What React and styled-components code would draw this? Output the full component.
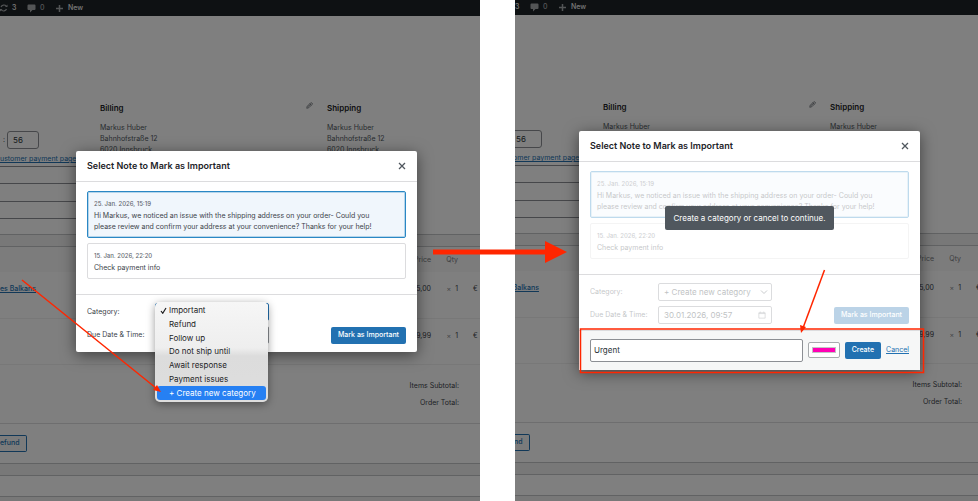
import styled, { createGlobalStyle, css } from 'styled-components';
import { useState } from 'react';

const categories = [
    'Important',
    'Refund',
    'Follow up',
    'Do not ship until',
    'Await response',
    'Payment issues',
    '+ Create new category',
];

const notes = [
    {
        id: 1,
        date: '25. Jan. 2026, 15:19',
        text: 'Hi Markus, we noticed an issue with the shipping address on your order- Could you please review and confirm your address at your convenience? Thanks for your help!',
    },
    { id: 2, date: '15. Jan. 2026, 22:20', text: 'Check payment info' },
];

const items = [
    { id: 1, name: 'es Balkans', price: '15,00' },
    { id: 2, name: '', price: '19,99' },
];

const Address = ({ title, editable }) => (
    <AddressColumn>
        <AddressTitle>
            {title}
            {editable && <PencilIcon />}
        </AddressTitle>
        <AddressText>
            Markus Huber<br />
            Bahnhofstraße 12<br />
            6020 Innsbruck
        </AddressText>
    </AddressColumn>
);

const PencilIcon = () => (
    <svg width="7" height="7" viewBox="0 0 14 14" fill="none" stroke="#646970" strokeWidth="1.6">
        <path d="M1.5 12.5l1-4 6.5-6.5q1.500-1 3 0t0 3L5.500 11.500z M7.500 3.500l3 3 M4 9.500l4-4" />
    </svg>
);

const OrderPage = () => (
    <>
        <AdminBar>
            <svg width="8" height="10" viewBox="0 0 16 20" fill="none" stroke="#a7aaad" strokeWidth="2.4">
                <path d="M2 8a6 6 0 0 1 10.500-1.500M13 12a6 6 0 0 1-10.500 1.500" />
                <path d="M10 8h5V3zM5 12H0v5z" fill="#a7aaad" stroke="none" />
            </svg>
            <Count>3</Count>
            <svg width="9" height="9" viewBox="0 0 18 18" fill="#a7aaad">
                <path d="M3 1h12q2 0 2 2v7q0 2-2 2h-4l-5 5v-5H3q-2 0-2-2V3q0-2 2-2z" />
            </svg>
            <Count $dim>0</Count>
            <svg width="9" height="9" viewBox="0 0 18 18" stroke="#a7aaad" strokeWidth="3">
                <path d="M9 2v14M2 9h14" />
            </svg>
            <span>New</span>
        </AdminBar>
        <OrderData>
            <OrderFields>
                <TimeRow>
                    :<MinuteInput aria-label="Minute" defaultValue="56" />
                </TimeRow>
                <PageLink href="#pay">ustomer payment page</PageLink>
                <FieldSelect aria-label="Status" />
                <FieldSelect aria-label="Customer" />
            </OrderFields>
            <Address title="Billing" editable />
            <Address title="Shipping" />
        </OrderData>
        <Postbox>
            <ItemsTable>
                <thead>
                    <tr>
                        <th></th>
                        <PriceHead>Price</PriceHead>
                        <QtyHead>Qty</QtyHead>
                        <TotalHead></TotalHead>
                    </tr>
                </thead>
                <tbody>
                    {items.map((item) => (
                        <tr key={item.id}>
                            <NameCell>{item.name && <a href="#item">{item.name}</a>}</NameCell>
                            <td>{item.price}</td>
                            <td><Times>×</Times> 1</td>
                            <TotalCell>€</TotalCell>
                        </tr>
                    ))}
                </tbody>
            </ItemsTable>
            <Totals>
                <div>Items Subtotal:</div>
                <div>Order Total:</div>
            </Totals>
            <RefundRow>
                <RefundButton>efund</RefundButton>
            </RefundRow>
        </Postbox>
        <Postbox>
            <PostboxHead />
        </Postbox>
    </>
);

const NoteModal = ({ creating }) => {
    const [selected, setSelected] = useState(1);
    const [name, setName] = useState('Urgent');
    const [color, setColor] = useState('#ff00b4');
    const id = creating ? 'create' : 'pick';

    return (
        <Modal role="dialog" aria-labelledby={`${id}-title`}>
            <ModalHeader>
                <ModalTitle id={`${id}-title`}>Select Note to Mark as Important</ModalTitle>
                <CloseButton aria-label="Close">
                    <svg width="8" height="8" viewBox="0 0 8 8" stroke="#50575e" strokeWidth="1.300">
                        <path d="M1 1l6 6M7 1l-6 6" />
                    </svg>
                </CloseButton>
            </ModalHeader>
            <ModalBody>
                <NoteList $dim={creating}>
                    {notes.map((note) => (
                        <Note
                            key={note.id}
                            $selected={note.id === selected}
                            disabled={creating}
                            onClick={() => setSelected(note.id)}
                        >
                            <NoteDate>{note.date}</NoteDate>
                            <NoteText>{note.text}</NoteText>
                        </Note>
                    ))}
                </NoteList>
                {creating && <Notice role="status">Create a category or cancel to continue.</Notice>}
            </ModalBody>
            <ModalFooter $tight={creating}>
                <Fields $dim={creating}>
                    <label htmlFor={`${id}-category`}>Category:</label>
                    <Field>
                        <Select
                            id={`${id}-category`}
                            $focus={!creating}
                            disabled={creating}
                            defaultValue={creating ? categories[6] : categories[0]}
                        >
                            {categories.map((category) => <option key={category}>{category}</option>)}
                        </Select>
                        <Chevron viewBox="0 0 8 8"><path d="M1 2.500l3 3 3-3" /></Chevron>
                        {!creating && (
                            <Menu role="listbox">
                                {categories.map((category, i) => (
                                    <Option key={category} role="option" $active={i === 6}>
                                        <Check>
                                            {i === 0 && (
                                                <svg width="7" height="7" viewBox="0 0 14 14" fill="none" stroke="#1d1d1f" strokeWidth="2.400">
                                                    <path d="M2 8l3.500 4.500L12 2" />
                                                </svg>
                                            )}
                                        </Check>
                                        {category}
                                    </Option>
                                ))}
                            </Menu>
                        )}
                    </Field>
                    <label htmlFor={`${id}-due`}>Due Date &amp; Time:</label>
                    <Field>
                        <DateInput id={`${id}-due`} disabled={creating} defaultValue="30.01.2026, 09:57" />
                        <CalendarIcon viewBox="0 0 14 14">
                            <path d="M1.500 3h11v9.500h-11zM1.500 4.500h11M4 1v2M10 1v2" />
                        </CalendarIcon>
                    </Field>
                </Fields>
                <Button $dim={creating} disabled={creating}>Mark as Important</Button>
            </ModalFooter>
            {creating && (
                <CreateRow>
                    <NameInput aria-label="Category name" value={name} onChange={(e) => setName(e.target.value)} />
                    <ColorInput type="color" aria-label="Category color" value={color} onChange={(e) => setColor(e.target.value)} />
                    <Button>Create</Button>
                    <PageLink href="#cancel">Cancel</PageLink>
                </CreateRow>
            )}
        </Modal>
    );
};

// Arrows and the box that walk the reader from one step to the next
const Annotations = () => (
    <Marks viewBox="0 0 978 501" fill="none" stroke="#ff2600">
        <path d="M433 252H546" strokeWidth="5" />
        <path d="M545 241l22 11-22 11z" fill="#ff2600" stroke="none" />
        <path d="M22 280L156 388" strokeWidth="1.500" />
        <path d="M161 392l-8-2 4-5z" fill="#ff2600" stroke="none" />
        <path d="M824.500 270L803 328" strokeWidth="1.500" />
        <path d="M801 333l-1-8 6 2z" fill="#ff2600" stroke="none" />
        <rect x="580.500" y="329" width="343" height="43.500" strokeWidth="1.500" />
    </Marks>
);

const App = () => (
    <>
        <GlobalStyle />
        <Page>
            <Step>
                <Screen $top={0} $right={13} $left={0}>
                    <OrderPage />
                    <Backdrop><NoteModal /></Backdrop>
                </Screen>
            </Step>
            <Step>
                <Screen $top={1} $right={18} $left={12}>
                    <OrderPage />
                    <Backdrop><NoteModal creating /></Backdrop>
                </Screen>
            </Step>
            <Annotations />
        </Page>
    </>
);

const GlobalStyle = createGlobalStyle`
* {
    box-sizing:border-box;
}

body {
    margin:0;
    background:#fff;
    color:#3c434a;
    font-family:Inter, "Liberation Sans", sans-serif;
    font-size:7px;
    line-height:12px;
}

button, input, select {
    font:inherit;
    color:inherit;
    margin:0;
}

svg {
    flex-shrink:0;
}
`

const Page = styled.main`
position:relative;
display:grid;
grid-template-columns:480fr 463fr;
gap:35px;
min-height:100vh;
overflow:hidden;
`

const Step = styled.section`
overflow:hidden;
min-width:0;
height:100vh;
`

/* each screen is cropped a little differently, so it bleeds past its step */
const Screen = styled.div`
position:relative;
height:calc(100% + 1px);
margin:${(p) => `-${p.$top}px -${p.$right}px 0 -${p.$left}px`};
background:#f0f0f1;
overflow:hidden;
`

const AdminBar = styled.header`
display:flex;
align-items:center;
gap:4px;
height:16px;
background:#1d2327;
color:#f0f0f1;
font-size:7px;
font-weight:500;
`

const Count = styled.span`
width:11px;
color:${(p) => (p.$dim ? '#a7aaad' : '#f0f0f1')};
`

const OrderData = styled.section`
display:grid;
grid-template-columns:100px 227px 1fr;
height:219px;
background:#fff;
border-bottom:1px solid #c3c4c7;
`

const OrderFields = styled.div`
display:flex;
flex-direction:column;
padding-top:115px;
white-space:nowrap;
`

const TimeRow = styled.div`
display:flex;
align-items:center;
gap:2px;
padding-left:3px;
margin-bottom:4px;
`

const MinuteInput = styled.input`
width:32px;
height:18px;
padding:0 5px;
border:1px solid #8c8f94;
border-radius:3px;
background:#fff;
color:#2c3338;
font-size:8px;
`

const PageLink = styled.a`
color:#2271b1;
font-size:7px;
text-decoration:underline;
`

const FieldSelect = styled.select`
appearance:none;
width:90px;
height:18px;
margin:1px 0 16px;
border:solid #8c8f94;
border-width:1px 0;
background:#fff;
`

const AddressColumn = styled.div`
padding-top:86px;
`

const AddressTitle = styled.h3`
display:flex;
justify-content:space-between;
margin:0 14px 8px 0;
color:#1d2327;
font-size:8px;
font-weight:600;
line-height:12px;
`

const AddressText = styled.p`
margin:0;
color:#50575e;
font-size:7px;
line-height:11px;
`

const Postbox = styled.section`
margin-top:11px;
background:#fff;
border:solid #c3c4c7;
border-width:1px 0;
`

const ItemsTable = styled.table`
width:100%;
table-layout:fixed;
border-collapse:collapse;
font-size:7px;

th {
    height:25px;
    padding:0;
    background:#f8f8f8;
    color:#787c82;
    font-weight:400;
    text-align:right;
}

td {
    height:46px;
    padding:11px 0 0;
    border-bottom:1px solid #f0f0f1;
    text-align:right;
    vertical-align:top;
}
`

const PriceHead = styled.th`
width:80px;
`

const QtyHead = styled.th`
width:27px;
`

const TotalHead = styled.th`
width:35px;
`

const NameCell = styled.td`
&& {
    text-align:left;
}

a {
    color:#2271b1;
    font-weight:500;
}
`

const TotalCell = styled.td`
&& {
    padding-left:15px;
    text-align:left;
}
`

const Times = styled.span`
color:#8c8f94;
margin-right:2px;
`

const Totals = styled.div`
padding:12px 34px 12px 0;
border-bottom:1px solid #dcdcde;
font-size:7px;
line-height:17px;
text-align:right;
`

const RefundRow = styled.div`
padding:11px 0;
`

const RefundButton = styled.button`
display:block;
height:17px;
width:27px;
padding:0;
border:1px solid #2271b1;
border-left:0;
border-radius:0 2px 2px 0;
background:#f6f7f7;
color:#2271b1;
font-size:7px;
font-weight:500;
text-align:left;
`

const PostboxHead = styled.div`
height:20px;
`

const Backdrop = styled.div`
position:absolute;
inset:0;
display:flex;
align-items:center;
justify-content:center;
background:rgba(0, 0, 0, 0.5);
`

const Modal = styled.div`
width:341px;
border-radius:2px;
background:#fff;
box-shadow:0 3px 15px rgba(0, 0, 0, 0.5);
`

const ModalHeader = styled.header`
display:flex;
align-items:center;
justify-content:space-between;
height:31px;
padding:0 11px;
border-bottom:1px solid #dcdcde;
`

const ModalTitle = styled.h2`
margin:0;
color:#1d2327;
font-size:9px;
font-weight:600;
`

const CloseButton = styled.button`
display:flex;
padding:0;
border:0;
background:none;
cursor:pointer;
`

const ModalBody = styled.div`
display:grid;
place-items:center;
position:relative;
padding:9px 11px 15px;
`

const dimmed = css`
opacity:0.3;
`

const NoteList = styled.div`
display:grid;
gap:5px;
width:100%;
${(p) => p.$dim && dimmed}
`

const Note = styled.button`
display:block;
width:100%;
padding:5px 6px;
border:1px solid ${(p) => (p.$selected ? '#2a87c4' : '#dcdcde')};
border-radius:2px;
background:${(p) => (p.$selected ? '#f0f6fc' : '#fff')};
box-shadow:${(p) => (p.$selected ? 'inset 0 0 0 1px rgba(42, 135, 196, 0.3)' : 'none')};
text-align:left;
`

const NoteDate = styled.span`
display:block;
color:#646970;
font-size:6px;
font-weight:500;
line-height:13px;
`

const NoteText = styled.span`
display:block;
padding-right:10px;
color:#3c434a;
font-size:7px;
line-height:11px;
`

const Notice = styled.div`
position:absolute;
top:44px;
padding:6px 8px;
border-radius:2px;
background:#50575e;
color:#fff;
font-size:8px;
white-space:nowrap;
`

const ModalFooter = styled.footer`
display:flex;
align-items:flex-end;
justify-content:space-between;
padding:${(p) => (p.$tight ? '8px 11px 6px' : '8px 11px')};
border-top:1px solid #dcdcde;
`

const Fields = styled.div`
display:grid;
grid-template-columns:68px 114px;
row-gap:5px;
align-items:center;

> * {
    ${(p) => p.$dim && dimmed}
}
`

const Field = styled.div`
position:relative;
height:18px;
`

const fieldBox = css`
display:block;
width:100%;
height:18px;
padding:0 5px;
border:1px solid #8c8f94;
border-radius:2px;
background:#fff;
color:#2c3338;
font-size:8px;
opacity:1;
`

const Select = styled.select`
${fieldBox}
appearance:none;
border-color:${(p) => (p.$focus ? '#2271b1' : '#8c8f94')};
`

const DateInput = styled.input`
${fieldBox}
`

const Chevron = styled.svg`
position:absolute;
top:5px;
right:4px;
width:8px;
height:8px;
fill:none;
stroke:#50575e;
pointer-events:none;
`

const CalendarIcon = styled(Chevron)`
right:6px;
`

const Menu = styled.ul`
position:absolute;
z-index:1;
top:-1px;
left:0;
right:1px;
display:grid;
grid-auto-rows:1fr;
height:100px;
margin:0;
padding:2px;
border-radius:5px;
background:linear-gradient(#f6f6f6, #eee 46%, #dcdcdc 54%, #dedede);
box-shadow:0 2px 8px rgba(0, 0, 0, 0.4);
list-style:none;
`

const Option = styled.li`
display:flex;
align-items:center;
padding-left:3px;
border-radius:3px;
background:${(p) => (p.$active ? '#2680f3' : 'none')};
color:${(p) => (p.$active ? '#fff' : '#1d1d1f')};
font-size:8px;
white-space:nowrap;
`

const Check = styled.span`
display:flex;
width:9px;
`

const Button = styled.button`
height:17px;
padding:0 7px;
border:0;
border-radius:2px;
background:#2271b1;
color:#fff;
font-size:7px;
font-weight:500;
white-space:nowrap;
${(p) => p.$dim && dimmed}
`

const CreateRow = styled.form`
display:flex;
align-items:center;
gap:5px;
padding:8px 11px;
border-top:1px solid #dcdcde;
background:#f6f7f7;
`

const NameInput = styled.input`
flex:1;
min-width:0;
height:23px;
padding:0 3px;
border:1px solid #8c8f94;
border-radius:2px;
background:#fff;
color:#2c3338;
font-size:8px;
`

const ColorInput = styled.input`
width:32px;
height:16px;
padding:4px 3px;
border:1px solid #a7aaad;
border-radius:2px;
background:#fff;

&::-webkit-color-swatch-wrapper {
    padding:0;
}

&::-webkit-color-swatch {
    border:1px solid #c3c4c7;
}
`

const Marks = styled.svg`
position:absolute;
z-index:2;
top:0;
left:0;
width:100%;
pointer-events:none;
`

export default App;
